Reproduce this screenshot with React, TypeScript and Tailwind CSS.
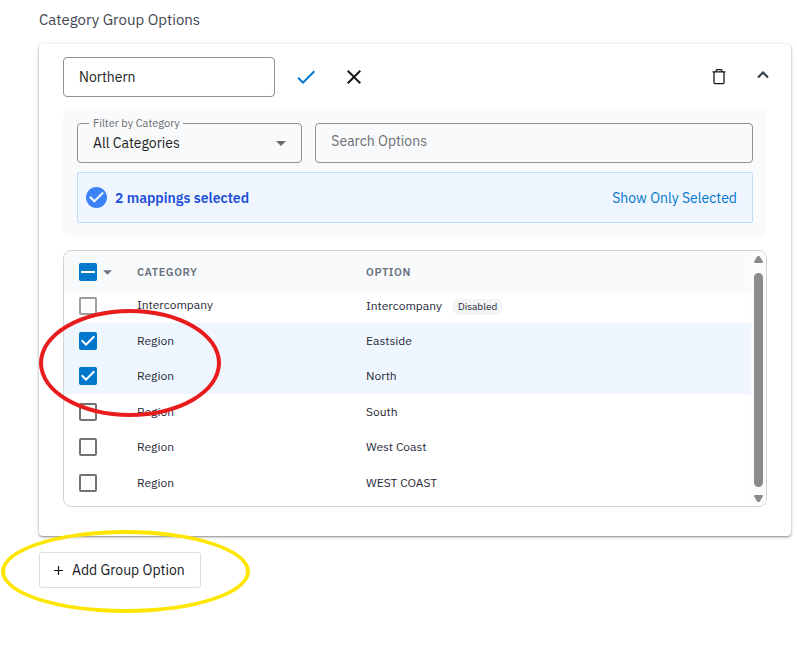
import { useState } from "react";
import { clsx } from "clsx";

type Mapping = {
  id: number;
  category: string;
  option: string;
  disabled?: boolean;
};

const mappings: Mapping[] = [
  { id: 1, category: "Intercompany", option: "Intercompany", disabled: true },
  { id: 2, category: "Region", option: "Eastside" },
  { id: 3, category: "Region", option: "North" },
  { id: 4, category: "Region", option: "South" },
  { id: 5, category: "Region", option: "West Coast" },
  { id: 6, category: "Region", option: "WEST COAST" },
];

const fieldClasses =
  "h-10 w-full appearance-none rounded border border-[#8f9194] bg-transparent px-[15px] text-sm text-[#1c1e21] placeholder:text-[#6b6e73] outline-none focus:border-[#0077cc]";

/** Native checkbox with the mark drawn on top of it. */
function Checkbox({
  label,
  checked,
  mixed,
  disabled,
  onChange,
}: {
  label: string;
  checked: boolean;
  mixed?: boolean;
  disabled?: boolean;
  onChange: () => void;
}) {
  return (
    <span className="relative block size-[18px]">
      <input
        type="checkbox"
        aria-label={label}
        checked={checked}
        disabled={disabled}
        onChange={onChange}
        className={clsx(
          "block size-[18px] appearance-none rounded-xs border-2",
          checked && "border-[#0077cc] bg-[#0077cc]",
          !checked && (disabled ? "border-[#9e9e9e] bg-white" : "border-[#737373] bg-white")
        )}
      />
      {checked ? (
        <svg viewBox="3 3 18 18" className="pointer-events-none absolute inset-0 size-[18px] fill-white">
          {mixed ? (
            <path d="M5 11h14v2H5z" />
          ) : (
            <path d="M10 17l-5-5 1.41-1.41L10 14.17l7.59-7.59L19 8l-9 9z" />
          )}
        </svg>
      ) : null}
    </span>
  );
}

function Caret({ className }: { className?: string }) {
  return (
    <svg viewBox="0 0 10 5" className={className} fill="currentColor" aria-hidden="true">
      <path d="M0 0h10L5 5z" />
    </svg>
  );
}

function ScrollRail() {
  return (
    <div className="flex w-[15px] shrink-0 flex-col items-center bg-[#fcfcfc] pt-[5px] pb-1 text-[#8b8b8b]" aria-hidden="true">
      <svg viewBox="0 0 9 7" className="h-[7px] w-[9px]" fill="currentColor">
        <path d="M4 0h1q.6 0 1 .7L8.800 5.500Q9.200 7 8 7H1Q-.2 7 .2 5.500L3 .7Q3.400 0 4 0z" />
      </svg>
      <div className="mt-[10px] mb-2 w-[9px] grow rounded-full bg-[#8b8b8b]" />
      <svg viewBox="0 0 9 7" className="h-[7px] w-[9px]" fill="currentColor">
        <path d="M4 7h1q.6 0 1-.7L8.800 1.500Q9.200 0 8 0H1Q-.2 0 .2 1.500L3 6.300Q3.400 7 4 7z" />
      </svg>
    </div>
  );
}

function CardHeader() {
  return (
    <div className="flex items-center">
      <input aria-label="Group option name" defaultValue="Northern" className={clsx(fieldClasses, "max-w-[212px]")} />
      <button type="button" aria-label="Save" className="ml-[19px] grid size-6 shrink-0 place-items-center text-[#0077cc]">
        <svg viewBox="0 0 24 24" className="size-6" fill="currentColor">
          <path d="M9 16.170 4.830 12l-1.420 1.410L9 19 21 7l-1.410-1.410z" />
        </svg>
      </button>
      <button type="button" aria-label="Cancel" className="ml-6 grid size-6 shrink-0 place-items-center text-[#16181b]">
        <svg viewBox="0 0 24 24" className="size-6" fill="currentColor">
          <path d="M19 6.410 17.590 5 12 10.590 6.410 5 5 6.410 10.590 12 5 17.590 6.410 19 12 13.410 17.590 19 19 17.590 13.410 12z" />
        </svg>
      </button>
      <button type="button" aria-label="Delete" className="ml-auto grid size-6 shrink-0 place-items-center text-[#16181b]">
        <svg viewBox="0 0 14 16" className="h-4 w-[14px]" fill="none" stroke="currentColor" strokeWidth="1.300">
          <path d="M.5 2.800h13M4.200 3V1.500q0-.8.8-.8h4q.8 0 .8.8V3M2 3v10.500q0 1.200 1.200 1.200h7.600q1.200 0 1.200-1.200V3" />
        </svg>
      </button>
      <button type="button" aria-label="Collapse" className="-mr-2 mb-1 ml-5 grid size-6 shrink-0 place-items-center text-[#374151]">
        <svg viewBox="0 0 12 8" className="h-2 w-3" fill="none" stroke="currentColor" strokeWidth="2.200">
          <path d="M1 6.500l5-5 5 5" />
        </svg>
      </button>
    </div>
  );
}

function Filters({ count }: { count: number }) {
  return (
    <div className="mt-3 rounded-lg bg-[#f9fafb] p-[14px]">
      <div className="flex gap-[13px]">
        <div className="relative w-1/3 shrink-0">
          <select id="category" className={fieldClasses}>
            <option>All Categories</option>
            <option>Intercompany</option>
            <option>Region</option>
          </select>
          <label htmlFor="category" className="absolute -top-2 left-3 bg-[#f9fafb] pr-[3px] pl-1 text-[11px] leading-4 text-[#666a70]">
            Filter by Category
          </label>
          <Caret className="pointer-events-none absolute top-[18px] right-4 h-[5px] w-[10px] text-[#6b6b6b]" />
        </div>
        <input type="search" aria-label="Search Options" placeholder="Search Options" className={clsx(fieldClasses, "pb-1")} />
      </div>
      <div className="mt-[9px] flex h-[51px] items-center rounded-xs border border-[#bfdbfe] bg-[#eff6ff] pr-[15px] pl-2">
        <svg viewBox="2 2 20 20" className="size-[21px] fill-[#3b82f6]" aria-hidden="true">
          <path d="M12 2C6.480 2 2 6.480 2 12s4.480 10 10 10 10-4.480 10-10S17.520 2 12 2zm-2 15l-5-5 1.410-1.410L10 14.170l7.590-7.590L19 8l-9 9z" />
        </svg>
        <p className="ml-2 text-sm font-semibold text-[#1d4ed8]">{count} mappings selected</p>
        <button type="button" className="ml-auto text-sm text-[#0077cc]">
          Show Only Selected
        </button>
      </div>
    </div>
  );
}

export default function App() {
  const [selected, setSelected] = useState([2, 3]);

  const toggle = (id: number) =>
    setSelected((ids) => (ids.includes(id) ? ids.filter((i) => i !== id) : [...ids, id]));

  return (
    <main className="relative min-h-screen bg-white pt-[10px] pr-[6px] pb-10 pl-[39px] font-['IBM_Plex_Sans','Noto_Sans',sans-serif]">
      <h2 className="text-[15px] leading-5 text-[#3f4652]">Category Group Options</h2>

      <section className="mt-[14px] rounded bg-white px-6 pt-[13px] pb-[29px] shadow-[0_1px_2px_rgba(0,0,0,0.4),0_1px_5px_rgba(0,0,0,0.12)]">
        <CardHeader />
        <Filters count={selected.length} />

        <div className="mt-[13px] flex overflow-hidden rounded-lg border border-[#d1d5db]">
          <table className="mb-[6px] grow table-fixed border-collapse text-left">
            <thead className="bg-[#f9fafb] text-[11px] tracking-wider text-[#6b7280]">
              <tr className="h-[42px]">
                <th className="w-[73px] pl-[15px]">
                  <div className="flex items-center gap-[6px]">
                    <Checkbox
                      label="Select all"
                      checked={selected.length > 0}
                      mixed
                      onChange={() => setSelected([])}
                    />
                    <Caret className="h-[5px] w-[9px]" />
                  </div>
                </th>
                <th className="w-[229px] font-semibold">CATEGORY</th>
                <th className="font-semibold">OPTION</th>
              </tr>
            </thead>
            <tbody className="text-xs text-[#1f2937]">
              {mappings.map((m) => (
                <tr
                  key={m.id}
                  className={clsx(
                    m.disabled ? "h-[30px]" : "h-[35px] odd:h-9",
                    selected.includes(m.id) && "bg-[#eff6ff]"
                  )}
                >
                  <td className={clsx("pl-[15px]", m.disabled && "pb-1")}>
                    <Checkbox
                      label={`${m.category} ${m.option}`}
                      checked={selected.includes(m.id)}
                      disabled={m.disabled}
                      onChange={() => toggle(m.id)}
                    />
                  </td>
                  <td className={clsx(m.disabled && "pb-[6px]")}>{m.category}</td>
                  <td className={clsx(m.disabled && "pb-1")}>
                    {m.option}
                    {m.disabled ? (
                      <span className="ml-[10px] inline-block rounded-full bg-[#f3f4f6] px-[6px] text-[10px] leading-4">
                        Disabled
                      </span>
                    ) : null}
                  </td>
                </tr>
              ))}
            </tbody>
          </table>
          <ScrollRail />
        </div>
      </section>

      <button
        type="button"
        className="mt-4 flex h-9 items-center gap-[9px] rounded-[3px] border border-[#dcdee2] bg-white pr-[15px] pl-[14px] text-sm text-[#16181b]"
      >
        <svg viewBox="0 0 9 9" className="size-[9px]" fill="none" stroke="currentColor" strokeWidth="1.200" aria-hidden="true">
          <path d="M4.500 0v9M0 4.500h9" />
        </svg>
        Add Group Option
      </button>

      {/* marker rings over the selected rows and the add button */}
      <div className="pointer-events-none absolute top-[309px] left-[39px] h-[108px] w-[182px] rounded-[50%] border-4 border-[#e81c1c]" />
      <div className="pointer-events-none absolute top-[530px] left-[1px] h-[83px] w-[249px] rounded-[50%] border-4 border-[#ffe600]" />
    </main>
  );
}
